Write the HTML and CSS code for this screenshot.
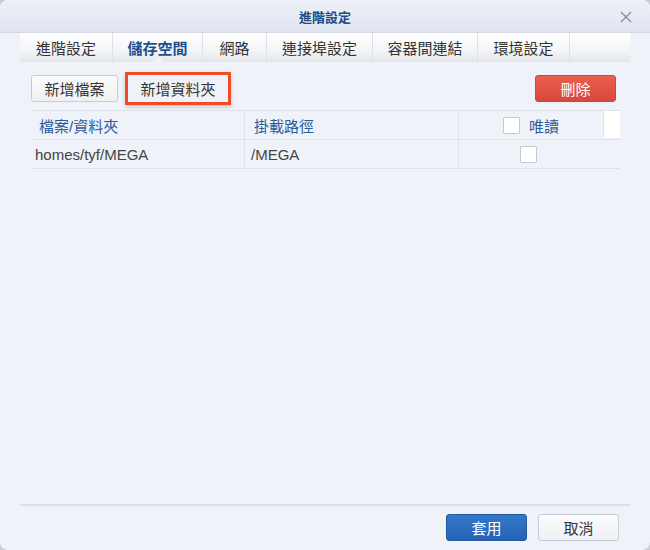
FILE: index.html
```html
<!DOCTYPE html>
<html lang="zh-Hant">
<head>
    <meta charset="UTF-8">
    <title>進階設定</title>
    <link rel="stylesheet" href="styles.css">
</head>
<body>
    <div class="window">
        <div class="titlebar">
            <span class="title">進階設定</span>
            <span class="close">
                <svg width="12" height="12" viewBox="0 0 12 12"><path d="M1 1 L11 11 M11 1 L1 11" stroke="#8a8f99" stroke-width="1.4" fill="none"/></svg>
            </span>
        </div>

        <div class="tabs">
            <div class="tab">進階設定</div>
            <div class="tab active">儲存空間</div>
            <div class="tab">網路</div>
            <div class="tab">連接埠設定</div>
            <div class="tab">容器間連結</div>
            <div class="tab">環境設定</div>
        </div>

        <div class="content">
            <div class="toolbar">
                <button class="btn">新增檔案</button>
                <button class="btn btn-plain highlight">新增資料夾</button>
                <span class="spacer"></span>
                <button class="btn btn-red">刪除</button>
            </div>

            <div class="grid">
                <div class="row head">
                    <div class="col c1">檔案/資料夾</div>
                    <div class="col c2">掛載路徑</div>
                    <div class="col c3"><span class="check"></span>唯讀</div>
                    <div class="col c4"></div>
                </div>
                <div class="row">
                    <div class="col c1">homes/tyf/MEGA</div>
                    <div class="col c2">/MEGA</div>
                    <div class="col c3 center"><span class="check"></span></div>
                </div>
            </div>
        </div>

        <div class="footer">
            <button class="btn btn-blue">套用</button>
            <button class="btn">取消</button>
        </div>
    </div>
</body>
</html>
```

FILE: styles.css
```css
body {
    margin: 0;
    background-color: #c9ccd2;
    font-family: "Liberation Sans", "Noto Sans CJK TC", sans-serif;
}

.window {
    width: 650px;
    height: 550px;
    background-color: #eff2f8;
    border-radius: 8px;
    overflow: hidden;
    display: flex;
    flex-direction: column;
}

/* title bar */
.titlebar {
    height: 32px;
    position: relative;
    display: flex;
    justify-content: center;
    align-items: center;
    background: linear-gradient(#eef1f9, #dfe4f0);
    border-bottom: 1px solid #d3d8e2;
    flex-shrink: 0;
}

.title {
    font-size: 13px;
    font-weight: bold;
    color: #204d86;
}

.close {
    position: absolute;
    right: 18px;
    top: 11px;
    line-height: 0;
}

/* tabs */
.tabs {
    margin: 0 20px;
    height: 29px;
    display: flex;
    background: linear-gradient(#ffffff 0%, #f5f6f8 55%, #e4e6eb 100%);
    flex-shrink: 0;
}

.tab {
    position: relative;
    display: flex;
    justify-content: center;
    align-items: center;
    white-space: nowrap;
    font-size: 15px;
    color: #333;
    border-right: 1px solid #dde2ea;
    box-sizing: border-box;
}

.tab:nth-child(1) { width: 93px; }
.tab:nth-child(2) { width: 90px; }
.tab:nth-child(3) { width: 64px; }
.tab:nth-child(4) { width: 106px; }
.tab:nth-child(5) { width: 105px; }
.tab:nth-child(6) { width: 92px; }

.tab.active {
    color: #1f4f8c;
    font-weight: bold;
}

.tab.active::after {
    content: "";
    position: absolute;
    left: 39px;
    bottom: 0;
    border-left: 6px solid transparent;
    border-right: 6px solid transparent;
    border-bottom: 6px solid #eff2f8;
}

/* content */
.content {
    flex: 1;
    padding: 13px 30px 0 31px;
}

.toolbar {
    display: flex;
    align-items: center;
    gap: 10px;
    height: 27px;
}

.spacer { flex: 1; }

.btn {
    height: 27px;
    padding: 0;
    white-space: nowrap;
    font-family: inherit;
    font-size: 15px;
    color: #333;
    background: linear-gradient(#fbfcfd, #eef0f3);
    border: 1px solid #c6ccd6;
    border-radius: 3px;
}

.toolbar .btn { width: 87px; }

.btn-plain {
    background: #eff2f8;
    border-color: transparent;
}

/* annotation box drawn on the screenshot */
.toolbar .highlight {
    width: 100px;
    border-radius: 0;
    box-shadow: 0 0 0 3px #f04b23, 0 2px 4px 3px rgba(0,0,0,0.18);
}

.toolbar .btn-red {
    width: 81px;
    margin-right: 4px;
    color: #fff;
    background: linear-gradient(#e8604f, #d9473a);
    border-color: #c9463a;
}

.btn-blue {
    color: #fff;
    background: linear-gradient(#3478c9, #2562b4);
    border-color: #23579f;
}

/* grid */
.grid {
    margin-top: 8px;
    font-size: 15px;
}

.row {
    display: flex;
    height: 28px;
    border-top: 1px solid #dce1ea;
}

.row:last-child {
    border-bottom: 1px solid #dce1ea;
}

.row.head {
    color: #2a5c9b;
}

.col {
    display: flex;
    align-items: center;
    padding: 0 4px;
    box-sizing: border-box;
    color: inherit;
}

.row:not(.head) .col { color: #444; }

.row.head .c1 { padding-left: 8px; }
.row.head .c2 { padding-left: 9px; }

.c1 { width: 214px; border-right: 1px solid #dfe4ec; }
.c2 { width: 214px; border-right: 1px solid #dfe4ec; padding-left: 6px; }
.c3 { width: 144px; justify-content: center; gap: 9px; padding: 0; }
.c4 { width: 17px; background: #fff; height: 27px; border-left: 1px solid #dfe4ec; }

.c3.center { padding-right: 6px; }

.check {
    width: 17px;
    height: 17px;
    background: #fff;
    border: 1px solid #c5ccd6;
    border-radius: 1px;
    box-sizing: border-box;
}

/* footer */
.footer {
    margin: 0 20px;
    height: 46px;
    box-sizing: border-box;
    border-top: 2px solid #dcdfe5;
    display: flex;
    justify-content: flex-end;
    align-items: flex-start;
    gap: 11px;
    padding: 8px 11px 0 0;
    flex-shrink: 0;
}

.footer .btn { width: 81px; }
```
